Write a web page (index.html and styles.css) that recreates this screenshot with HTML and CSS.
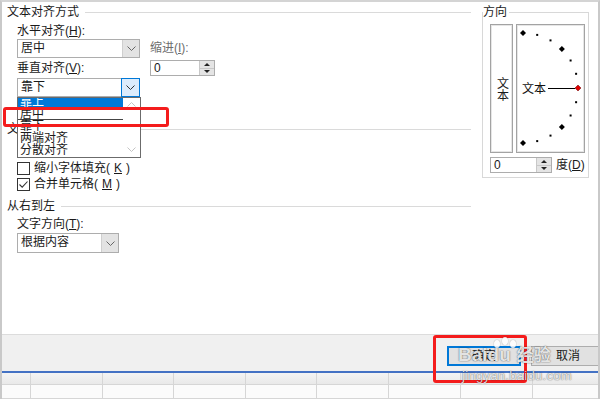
FILE: index.html
```html
<!DOCTYPE html>
<html lang="zh-CN">
<head>
    <meta charset="UTF-8">
    <title>设置单元格格式 - 对齐</title>
    <link rel="stylesheet" href="styles.css">
</head>
<body>
<div class="screen">
    <div class="dialog">
        <div class="main">
            <div class="group-title">文本对齐方式</div>
            <div class="align-grid">
                <div class="lbl r1">水平对齐(<u>H</u>):</div>
                <div class="select r2">
                    <span class="val">居中</span>
                    <span class="drop"><svg width="9" height="5" viewBox="0 0 9 5"><polyline points="0.5,0.5 4.5,4.5 8.5,0.5" fill="none" stroke="#666"/></svg></span>
                </div>
                <div class="lbl dim r2 c2">缩进(<u>I</u>):</div>
                <div class="lbl r3">垂直对齐(<u>V</u>):</div>
                <div class="spin r3 c2">
                    <span class="num">0</span>
                    <span class="arrows">
                        <span><svg width="6" height="3" viewBox="0 0 6 3"><polygon points="0,3 3,0 6,3" fill="#222"/></svg></span>
                        <span><svg width="6" height="3" viewBox="0 0 6 3"><polygon points="0,0 6,0 3,3" fill="#222"/></svg></span>
                    </span>
                </div>
                <div class="select active r4">
                    <span class="val">靠下</span>
                    <span class="drop"><svg width="9" height="5" viewBox="0 0 9 5"><polyline points="0.5,0.5 4.5,4.5 8.5,0.5" fill="none" stroke="#333"/></svg></span>
                </div>
            </div>

            <div class="group-title gap-control">文本控制</div>
            <div class="checks">
                <div class="check"><span class="box"></span>缩小字体填充(<u>K</u>)</div>
                <div class="check"><span class="box"><svg width="11" height="11" viewBox="0 0 11 11"><polyline points="1.5,5.5 4.2,8.2 9.5,2.5" fill="none" stroke="#333" stroke-width="1.1"/></svg></span>合并单元格(<u>M</u>)</div>
            </div>

            <div class="group-title gap-rtl">从右到左</div>
            <div class="lbl indent gap-dir">文字方向(<u>T</u>):</div>
            <div class="select wide indent">
                <span class="val">根据内容</span>
                <span class="drop"><svg width="9" height="5" viewBox="0 0 9 5"><polyline points="0.5,0.5 4.5,4.5 8.5,0.5" fill="none" stroke="#666"/></svg></span>
            </div>
        </div>

        <fieldset class="orient">
            <legend>方向</legend>
            <div class="orient-body">
                <div class="dial-row">
                    <div class="vtext"><span>文本</span></div>
                    <div class="dial">
                        <svg width="67" height="127" viewBox="0 0 67 127">
                            <polygon points="6,5 9,8 6,11 3,8" fill="#000"/>
                            <rect x="19.2" y="8.9" width="2" height="2" fill="#000"/>
                            <rect x="32.5" y="14.4" width="2" height="2" fill="#000"/>
                            <polygon points="44.9,21.1 47.9,24.1 44.9,27.1 41.9,24.1" fill="#000"/>
                            <rect x="52.6" y="34.5" width="2" height="2" fill="#000"/>
                            <rect x="58.1" y="47.8" width="2" height="2" fill="#000"/>
                            <line x1="31" y1="63.5" x2="58" y2="63.5" stroke="#000"/>
                            <polygon points="61,60 64,63 61,66 58,63" fill="#e00000" stroke="#600" stroke-width="0.5"/>
                            <rect x="58.1" y="76.2" width="2" height="2" fill="#000"/>
                            <rect x="52.6" y="89.5" width="2" height="2" fill="#000"/>
                            <polygon points="44.9,98.9 47.9,101.9 44.9,104.9 41.9,101.9" fill="#000"/>
                            <rect x="32.5" y="109.6" width="2" height="2" fill="#000"/>
                            <rect x="19.2" y="115.1" width="2" height="2" fill="#000"/>
                            <polygon points="6,115 9,118 6,121 3,118" fill="#000"/>
                            <text x="5" y="68" font-size="12" font-family="Noto Sans CJK SC, sans-serif" fill="#111">文本</text>
                        </svg>
                    </div>
                </div>
                <div class="deg-row">
                    <div class="spin small">
                        <span class="num">0</span>
                        <span class="arrows">
                            <span><svg width="6" height="3" viewBox="0 0 6 3"><polygon points="0,3 3,0 6,3" fill="#222"/></svg></span>
                            <span><svg width="6" height="3" viewBox="0 0 6 3"><polygon points="0,0 6,0 3,3" fill="#222"/></svg></span>
                        </span>
                    </div>
                    <span>度(<u>D</u>)</span>
                </div>
            </div>
        </fieldset>
    </div>

    <div class="footer">
        <button class="btn default">确定</button>
        <button class="btn">取消</button>
    </div>

    <div class="sheet">
        <div class="sheet-row head">
            <span class="cell c-row"></span><span class="cell c72"></span><span class="cell c71"></span><span class="cell c72"></span><span class="cell c71"></span><span class="cell c72"></span><span class="cell c72"></span><span class="cell c72"></span><span class="cell rest"></span>
        </div>
        <div class="sheet-row">
            <span class="cell c-row"></span><span class="cell c72"></span><span class="cell c71"></span><span class="cell c72"></span><span class="cell c71"></span><span class="cell c72"></span><span class="cell c72"></span><span class="cell c72"></span><span class="cell rest"></span>
        </div>
    </div>

    <!-- open dropdown of 垂直对齐 -->
    <div class="listbox">
        <div class="list-items">
            <div class="item selected">靠上</div>
            <div class="item split">居中</div>
            <div class="item">靠下</div>
            <div class="item">两端对齐</div>
            <div class="item">分散对齐</div>
        </div>
        <div class="list-scroll">
            <svg width="9" height="5" viewBox="0 0 9 5"><polyline points="0.5,4.5 4.5,0.5 8.5,4.5" fill="none" stroke="#c4c4c4"/></svg>
            <svg width="9" height="5" viewBox="0 0 9 5"><polyline points="0.5,0.5 4.5,4.5 8.5,0.5" fill="none" stroke="#c4c4c4"/></svg>
        </div>
    </div>

    <div class="mark mark-list"></div>
    <div class="mark mark-ok"></div>

    <div class="wm">
        <div class="wm-logo">Bai<span class="paw"><i></i><i></i><i></i></span>du<span class="wm-cn">经验</span></div>
        <div class="wm-url">jingyan.baidu.com</div>
    </div>
</div>
</body>
</html>
```

FILE: styles.css
```css
* {
    box-sizing: border-box;
}
body {
    margin: 0;
    font-family: "Liberation Sans", "Noto Sans CJK SC", sans-serif;
    font-size: 12px;
    line-height: 15px;
    color: #1a1a1a;
    background: #fff;
}
u {
    text-decoration-thickness: 1px;
    text-underline-offset: 1px;
}
.screen {
    position: relative;
    width: 600px;
    height: 399px;
    overflow: hidden;
    border-top: 2px solid #d4d4d4;
    border-left: 2px solid #c9c9c9;
    border-right: 2px solid #c9c9c9;
}

/* dialog body */
.dialog {
    display: flex;
    height: 332px;
    background: #fff;
}
.main {
    width: 469px;
    padding: 3px 0 0 5px;
}
.group-title {
    display: flex;
    align-items: center;
    height: 15px;
}
.group-title::after {
    content: "";
    flex: 1;
    height: 1px;
    margin-left: 6px;
    background: #dadada;
}
.gap-control {
    margin-top: 25px;
}
.gap-rtl {
    margin-top: 7px;
}
.gap-dir {
    margin-top: 3px;
}
.indent {
    margin-left: 10px;
}
.lbl {
    height: 15px;
    white-space: nowrap;
}
.dim {
    color: #6d6d6d;
}
.align-grid {
    display: grid;
    grid-template-columns: 123px 65px;
    grid-template-rows: 15px 19px 20px 19px;
    column-gap: 10px;
    align-items: center;
    margin: 4px 0 0 10px;
}
.r1 { grid-row: 1; grid-column: 1; }
.r2 { grid-row: 2; grid-column: 1; }
.r3 { grid-row: 3; grid-column: 1; }
.r4 { grid-row: 4; grid-column: 1; }
.c2 { grid-column: 2; }

.select {
    display: flex;
    height: 19px;
    border: 1px solid #adadad;
    background: #fff;
}
.select.wide {
    width: 102px;
    height: 20px;
    margin-top: 1px;
}
.select .val {
    flex: 1;
    padding-left: 3px;
    line-height: 17px;
}
.select .drop {
    display: flex;
    align-items: center;
    justify-content: center;
    width: 17px;
    border-left: 1px solid #cfcfcf;
    background: #e3e3e3;
}
.select.active .drop {
    width: 19px;
    margin: -1px -1px -1px 0;
    border: 1px solid #0078d7;
    background: #dcecfc;
}

.spin {
    display: flex;
    height: 16px;
    border: 1px solid #adadad;
    background: #fff;
}
.spin.small {
    width: 62px;
}
.spin .num {
    flex: 1;
    padding-left: 3px;
    line-height: 14px;
}
.spin .arrows {
    display: flex;
    flex-direction: column;
    width: 15px;
    border-left: 1px solid #c8c8c8;
}
.spin .arrows span {
    flex: 1;
    display: flex;
    align-items: center;
    justify-content: center;
    background: #e4e4e4;
}
.spin .arrows span + span {
    border-top: 1px solid #c8c8c8;
}

.checks {
    margin: 23px 0 0 10px;
}
.check {
    display: flex;
    align-items: center;
    gap: 4px;
    height: 16px;
    white-space: nowrap;
}
.check .box {
    display: flex;
    align-items: center;
    justify-content: center;
    width: 13px;
    height: 13px;
    border: 1px solid #333;
    background: #fff;
}

/* orientation */
.orient {
    width: 107px;
    margin: 3px 0 0 11px;
    padding: 0;
    border: 1px solid #d8d8d8;
    align-self: flex-start;
}
.orient legend {
    padding: 0 2px 0 0;
    line-height: 15px;
}
.orient-body {
    padding: 4px 3px 4px 7px;
}
.dial-row {
    display: flex;
    gap: 3px;
    height: 129px;
}
.vtext {
    display: flex;
    align-items: center;
    justify-content: center;
    width: 23px;
    border: 1px solid #a3a3a3;
    box-shadow: inset 0 0 0 1px #e6e6e6;
}
.vtext span {
    writing-mode: vertical-rl;
    text-orientation: upright;
    line-height: 12px;
}
.dial {
    width: 69px;
    border: 1px solid #a3a3a3;
    box-shadow: inset 0 0 0 1px #e6e6e6;
}
.dial svg {
    display: block;
}
.deg-row {
    display: flex;
    align-items: center;
    gap: 4px;
    height: 16px;
    margin-top: 4px;
    white-space: nowrap;
}

/* footer buttons */
.footer {
    display: flex;
    gap: 10px;
    height: 39px;
    padding: 11px 0 0 445px;
    border-top: 1px solid #dcdcdc;
    border-bottom: 2px solid #4472c4;
    background: #f0f0f0;
}
.btn {
    flex-shrink: 0;
    width: 74px;
    height: 20px;
    padding: 0;
    border: 1px solid #adadad;
    background: #e1e1e1;
    font: inherit;
    color: #1a1a1a;
}
.btn.default {
    border-color: #0078d7;
    box-shadow: inset 0 0 0 1px #0078d7;
}

/* spreadsheet behind */
.sheet-row {
    display: flex;
    height: 12px;
    border-bottom: 1px solid #d6d6d6;
    background: #fbfbfb;
}
.sheet-row.head {
    background: linear-gradient(#f4f4f4, #e9e9e9);
}
.sheet-row + .sheet-row {
    height: 14px;
}
.cell {
    flex-shrink: 0;
    border-right: 1px solid #d6d6d6;
}
.c-row { width: 29px; }
.c72 { width: 72px; }
.c71 { width: 71px; }
.rest { flex: 1; border-right: none; }

/* open list of the vertical alignment select */
.listbox {
    position: absolute;
    left: 15px;
    top: 95px;
    display: flex;
    width: 124px;
    height: 61px;
    overflow: hidden;
    border: 1px solid #6b6b6b;
    background: #fff;
}
.list-items {
    flex: 1;
    margin-top: -2px;
}
.item {
    height: 12px;
    padding-left: 2px;
    line-height: 12px;
    white-space: nowrap;
}
.item.selected {
    background: #0078d7;
    color: #fff;
}
.item.split {
    box-shadow: inset 0 -1px 0 #444;
}
.list-scroll {
    display: flex;
    flex-direction: column;
    align-items: center;
    justify-content: space-between;
    width: 17px;
    padding: 4px 0 5px;
    background: #fff;
}

/* red highlights */
.mark {
    position: absolute;
    border: 3px solid #f41c1c;
    border-radius: 3px;
}
.mark-list {
    left: 1px;
    top: 105px;
    width: 166px;
    height: 20px;
}
.mark-ok {
    left: 431px;
    top: 333px;
    width: 94px;
    height: 48px;
}

/* watermark */
.wm {
    position: absolute;
    left: 456px;
    top: 340px;
    color: rgba(255, 255, 255, 0.85);
    text-shadow: 0 0 1px rgba(0, 0, 0, 0.6), 0 0 2px rgba(0, 0, 0, 0.25);
    font-family: "Liberation Sans", "Noto Sans CJK SC", sans-serif;
    pointer-events: none;
}
.wm-logo {
    position: relative;
    font-size: 19px;
    line-height: 24px;
    font-weight: bold;
    white-space: nowrap;
}
.wm-cn {
    margin-left: 6px;
    font-family: "Noto Sans CJK SC", sans-serif;
    font-size: 17px;
}
.paw {
    position: absolute;
    left: 36px;
    top: -5px;
    width: 22px;
    height: 10px;
}
.paw i {
    position: absolute;
    top: 0;
    width: 6px;
    height: 8px;
    border-radius: 50%;
    background: rgba(255, 255, 255, 0.85);
    box-shadow: 0 0 1px rgba(0, 0, 0, 0.6);
}
.paw i:nth-child(1) { left: 0; top: 3px; }
.paw i:nth-child(2) { left: 8px; }
.paw i:nth-child(3) { left: 16px; top: 3px; }
.wm-url {
    margin: 1px 0 0 4px;
    font-size: 13px;
    line-height: 15px;
    letter-spacing: 0.3px;
}
```
